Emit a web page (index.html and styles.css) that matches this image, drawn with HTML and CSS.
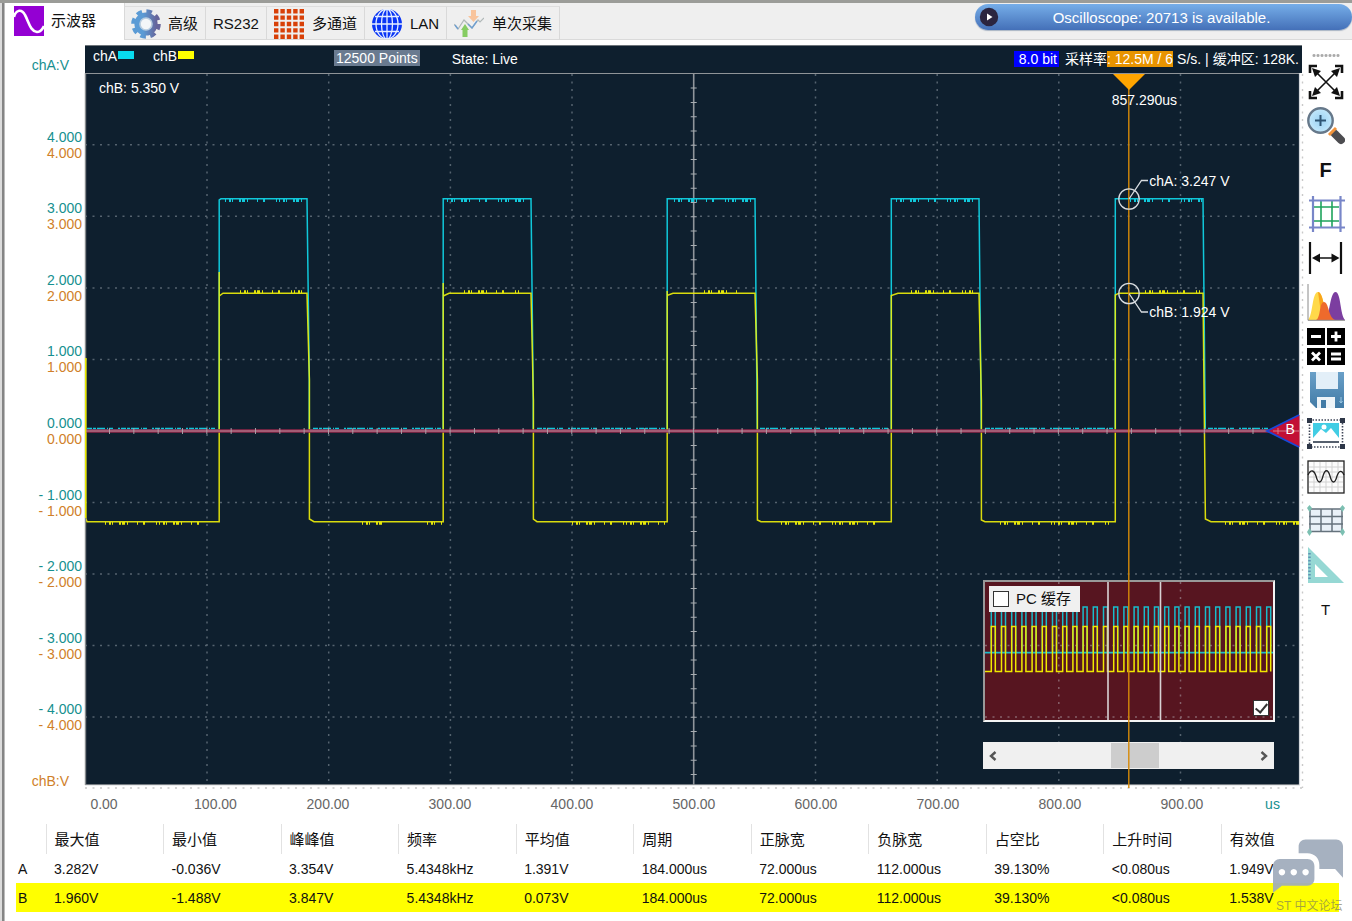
FILE: index.html
```html
<!DOCTYPE html>
<html lang="zh-CN">
<head>
<meta charset="utf-8">
<title>示波器</title>
<link rel="stylesheet" href="styles.css">
</head>
<body>
<div class="window">
  <header class="toolbar">
    <nav class="tabs">
      <button class="tab tab-active" type="button">
        <svg class="tab-icon" viewBox="0 0 30 30"><rect width="30" height="30" fill="#9400d3"/><path d="M0 11C2 3 8 3 11 9C15 16 16 25 23 26C26 26 28 24 30 20" fill="none" stroke="#fff" stroke-width="2.6"/></svg>
        <span>示波器</span>
      </button>
      <button class="tab tab-gear" type="button">
        <svg class="tab-icon" viewBox="0 0 30 30">
          <defs><linearGradient id="gear" gradientUnits="userSpaceOnUse" x1="0" y1="0" x2="30" y2="0"><stop offset=".4" stop-color="#5b9bd5"/><stop offset=".85" stop-color="#66659b"/></linearGradient></defs>
          <circle cx="15" cy="15" r="12.6" fill="none" stroke="url(#gear)" stroke-width="4.4" stroke-dasharray="5.5 4.4"/>
          <circle cx="15" cy="15" r="8.6" fill="none" stroke="url(#gear)" stroke-width="6"/>
          <circle cx="15" cy="15" r="6" fill="#f4f6f8" stroke="#b9cde0" stroke-width="1.6"/>
        </svg>
        <span>高级</span>
      </button>
      <button class="tab" type="button"><span>RS232</span></button>
      <button class="tab" type="button">
        <svg class="tab-icon" viewBox="0 0 30 30"><g stroke="#d84008" stroke-width="4.4" stroke-dasharray="4.4 2"><path d="M0 2.2H30M0 8.6H30M0 15H30M0 21.4H30M0 27.8H30"/></g></svg>
        <span>多通道</span>
      </button>
      <button class="tab" type="button">
        <svg class="tab-icon" viewBox="0 0 30 30"><circle cx="15" cy="15" r="15" fill="#0a35f5"/><g fill="none" stroke="#e6efff" stroke-width="1.3"><path d="M15 0V30M0 15H30M3 7.5H27M3 22.5H27"/><ellipse cx="15" cy="15" rx="5.5" ry="15"/><ellipse cx="15" cy="15" rx="11" ry="15"/></g></svg>
        <span>LAN</span>
      </button>
      <button class="tab" type="button">
        <svg class="tab-icon" viewBox="0 0 30 30"><path d="M0 15L4 20L10 11L18 19L24 11L26 13L30 9" fill="none" stroke="#b0b8b8" stroke-width="1.2"/><path d="M14 15L18 19L23 12M1 16L4 20" fill="none" stroke="#6f9fd0" stroke-width="1.4"/><path d="M17 1H22V7H25L19.500 13L14 7H17Z" fill="#f8c49c"/><path d="M11 15L15 21H13.500V28H8.500V21H7Z" fill="#86cc62"/></svg>
        <span>单次采集</span>
      </button>
    </nav>
    <div class="notice" role="status">
      <svg class="notice-icon" viewBox="0 0 20 20"><circle cx="10" cy="10" r="9.2" fill="#2b2540"/><path d="M8 6.5L13.5 10L8 13.5Z" fill="#fff"/></svg>
      <span class="notice-text">Oscilloscope: 20713 is available.</span>
    </div>
  </header>

  <main class="scope">
    <div class="y-axis">
      <div class="axis-name ch-a">chA:V</div>
      <div class="y-pair"><span class="ch-a">4.000</span><span class="ch-b">4.000</span></div>
      <div class="y-pair"><span class="ch-a">3.000</span><span class="ch-b">3.000</span></div>
      <div class="y-pair"><span class="ch-a">2.000</span><span class="ch-b">2.000</span></div>
      <div class="y-pair"><span class="ch-a">1.000</span><span class="ch-b">1.000</span></div>
      <div class="y-pair"><span class="ch-a">0.000</span><span class="ch-b">0.000</span></div>
      <div class="y-pair"><span class="ch-a">- 1.000</span><span class="ch-b">- 1.000</span></div>
      <div class="y-pair"><span class="ch-a">- 2.000</span><span class="ch-b">- 2.000</span></div>
      <div class="y-pair"><span class="ch-a">- 3.000</span><span class="ch-b">- 3.000</span></div>
      <div class="y-pair"><span class="ch-a">- 4.000</span><span class="ch-b">- 4.000</span></div>
      <div class="axis-name axis-name-low ch-b">chB:V</div>
    </div>

    <div class="status">
      <span class="legend">chA<i class="swatch swatch-a"></i></span>
      <span class="legend legend-b">chB<i class="swatch swatch-b"></i></span>
      <span class="points">12500 Points</span>
      <span class="state">State: Live</span>
      <span class="sampling"><b class="bits">8.0 bit</b><span>采样率</span><b class="rate">: 12.5M / 6</b><span class="buffer">S/s. | 缓冲区: 128K.</span></span>
    </div>

    <section class="plot">
      <svg class="layer" viewBox="85 73 1215 712" preserveAspectRatio="none">
        <g class="grid">
          <path d="M207 74V785M328.7 74V785M450.4 74V785M572 74V785M815.5 74V785M937.2 74V785M1058.8 74V785M1180.5 74V785"/>
          <path d="M85 144.8H1300M85 216.3H1300M85 287.9H1300M85 359.5H1300M85 502.5H1300M85 574H1300M85 645.4H1300M85 716.9H1300"/>
        </g>
        <path class="outer-dots" d="M1302.5 74V788M85 788H1302"/>
        <path d="M693.7 74V785" stroke="#8f959b" stroke-width="1.6"/>
        <path d="M693.7 87.6V785" stroke="#a8adb2" stroke-width="6" stroke-dasharray="1 13.3"/>

        <path class="trace trace-a" d="M86 430H219.2V200L221 198.8H307L309.3 378V430H443.2V198.8H531L533.3 400V430H667.2V198.8H755L757.3 430H891.3V198.8H979L981.3 430H1115.3V198.8H1203L1205.3 430H1300"/>
        <g class="noise noise-a">
          <path d="M225 200.500H307M447 200.500H531M674 200.500H753M896 200.500H978M1130 200.500H1202"/>
          <path class="noise-low" d="M87 428.5H219M313 428.5H443M537 428.5H667M760 428.5H891M985 428.5H1115M1208 428.5H1270"/>
        </g>
        <path class="trace trace-b" d="M85.7 358V518L87 521.7H219.2V272V296L223 293.2H307L309.4 380V519L314 521.7H443.2V283V296L449 293.2H531L533.4 400V519L537 521.7H667.2V291V295.5L673 293.2H755L757.4 380V520L761 521.7H891.3V295.5L898 293.2H979L981.4 400V520L985 521.7H1115.3V295L1119 293.2H1203L1205.4 519L1211 521.7H1300"/>
        <g class="noise noise-b">
          <path d="M240 291.8H307M464 291.8H519M704 291.8H740M911 291.8H973M1145 291.8H1201"/>
          <path d="M105 523.3H205M362 523.3H384M427 523.3H442M572 523.3H665M781 523.3H880M1000 523.3H1112M1225 523.3H1300"/>
        </g>
        <path d="M85 431H1300" stroke="#92274a" stroke-width="3.4"/>
        <path d="M85 431H1300" stroke="#b5929f" stroke-width="1.2"/>
        <path d="M109 431H1300" stroke="#a8a0a8" stroke-width="6" stroke-dasharray="1 23.33"/>
        <path d="M85.5 73V785" stroke="#85898c" stroke-width="1.4"/>
        <path d="M85.7 358V518" stroke="#e8e800" stroke-width="1.4"/>
        <path d="M85 73.5H1300M85 784.7H1300" stroke="#8f9498" stroke-width="1"/>
        <path d="M1299.5 73V785" stroke="#d4d8dc" stroke-width="1.2"/>
        <path d="M1267 431L1299.5 415V447Z" fill="#c20f35"/>
        <path d="M1299 415L1267 431L1299 447" fill="none" stroke="#1748d8" stroke-width="1.8"/>
        <path d="M1273 431H1299M1278 428V434" stroke="#d07c8c"/>
      </svg>
      <span class="tag tag-level">chB: 5.350 V</span>

      <div class="overview">
        <svg class="layer" viewBox="985 582 288 138" preserveAspectRatio="none">
          <path class="overview-grid" d="M1058.8 582V720M1180.5 582V720M985 645.4H1273M985 716.9H1273"/>
          <path d="M985 652.7H1273" stroke="#19bccb" stroke-width="1.8"/>
          <path fill="none" stroke="#19bccb" stroke-width="1.5" d="M991.3 652v-45h4v45m6.2 0v-45h4v45m6.2 0v-45h4v45m6.2 0v-45h4v45m6.2 0v-45h4v45m6.2 0v-45h4v45m6.2 0v-45h4v45m6.2 0v-45h4v45m6.2 0v-45h4v45m6.2 0v-45h4v45m6.2 0v-45h4v45m6.2 0v-45h4v45m6.2 0v-45h4v45m6.2 0v-45h4v45m6.2 0v-45h4v45m6.2 0v-45h4v45m6.2 0v-45h4v45m6.2 0v-45h4v45m6.2 0v-45h4v45m6.2 0v-45h4v45m6.2 0v-45h4v45m6.2 0v-45h4v45m6.2 0v-45h4v45m6.2 0v-45h4v45m6.2 0v-45h4v45m6.2 0v-45h4v45m6.2 0v-45h4v45m6.2 0v-45h4v45"/>
          <path fill="none" stroke="#f0e800" stroke-width="1.5" d="M985 671.5h6.3v-45h4v45h6.2v-45h4v45h6.2v-45h4v45h6.2v-45h4v45h6.2v-45h4v45h6.2v-45h4v45h6.2v-45h4v45h6.2v-45h4v45h6.2v-45h4v45h6.2v-45h4v45h6.2v-45h4v45h6.2v-45h4v45h6.2v-45h4v45h6.2v-45h4v45h6.2v-45h4v45h6.2v-45h4v45h6.2v-45h4v45h6.2v-45h4v45h6.2v-45h4v45h6.2v-45h4v45h6.2v-45h4v45h6.2v-45h4v45h6.2v-45h4v45h6.2v-45h4v45h6.2v-45h4v45h6.2v-45h4v45h6.2v-45h4v45h6.2v-45h4v45"/>
          <path d="M1108 582V720M1160.5 582V720" stroke="#d8d2d4" stroke-width="1.6"/>
        </svg>
        <label class="cache"><input class="check" type="checkbox"><span>PC 缓存</span></label>
        <input class="check check-corner" type="checkbox" checked aria-label="显示概览">
      </div>

      <div class="scrollbar">
        <button class="scroll-btn" type="button" aria-label="向左"><svg width="8" height="10" viewBox="0 0 8 10"><path d="M6.500 1L2 5L6.500 9" fill="none" stroke="#555" stroke-width="2.4"/></svg></button>
        <span class="scroll-thumb"></span>
        <button class="scroll-btn scroll-right" type="button" aria-label="向右"><svg width="8" height="10" viewBox="0 0 8 10"><path d="M1.500 1L6 5L1.500 9" fill="none" stroke="#555" stroke-width="2.4"/></svg></button>
      </div>

      <svg class="layer layer-cursor" viewBox="85 73 1215 712" preserveAspectRatio="none">
        <path d="M1128.800 74V788" stroke="#d68a08" stroke-width="1.4"/>
        <path d="M1113 74H1145L1129 90Z" fill="#ffa500"/>
        <g fill="none" stroke="#d8dce0" stroke-width="1.3"><circle cx="1129" cy="199" r="10.200"/><circle cx="1129" cy="293.500" r="10.200"/><path d="M1129 199L1141.500 180.500H1148M1129 293.500L1141.500 312H1148"/></g>
      </svg>
      <span class="tag tag-time">857.290us</span>
      <span class="tag tag-a">chA: 3.247 V</span>
      <span class="tag tag-b">chB: 1.924 V</span>
      <span class="tag tag-trigger">B</span>
    </section>

    <div class="x-axis">
      <span>0.00</span><span class="x-first">100.00</span><span>200.00</span><span>300.00</span><span>400.00</span><span>500.00</span><span>600.00</span><span>700.00</span><span>800.00</span><span>900.00</span><span class="ch-a">us</span>
    </div>

    <aside class="tools">
      <span class="grip"></span>
      <button class="tool" type="button" aria-label="适应窗口"><svg viewBox="0 0 38 38"><g fill="none" stroke="#111"><path d="M8 8L30 30M30 8L8 30" stroke-width="1.600"/><path d="M3 10V3H10M28 3H35V10M35 28V35H28M10 35H3V28" stroke-width="2.600"/></g><path d="M5 5L14 8L8 14ZM33 5L24 8L30 14ZM33 33L24 30L30 24ZM5 33L14 30L8 24Z" fill="#111"/></svg></button>
      <button class="tool" type="button" aria-label="放大"><svg viewBox="0 0 38 38"><defs><radialGradient id="lens"><stop offset="0" stop-color="#9bd2f4"/><stop offset="1" stop-color="#c3e8fb"/></radialGradient></defs><path d="M28 27L34 33" stroke="#4c4c50" stroke-width="8" stroke-linecap="round"/><path d="M22 28L29 21" stroke="#f2943c" stroke-width="3"/><circle cx="13.500" cy="13.500" r="12.200" fill="url(#lens)" stroke="#66788a" stroke-width="2.400"/><path d="M13.500 8V19M8 13.500H19" stroke="#2f5573" stroke-width="2"/></svg></button>
      <button class="tool tool-bold" type="button">F</button>
      <button class="tool" type="button" aria-label="网格"><svg viewBox="0 0 38 38"><path d="M7 12H32M7 26H32M14 6V32M25 6V32" stroke="#1fa35c" stroke-width="1.600"/><path d="M2 5.500H38M2 32.500H38M6 1V37M33.500 1V37" stroke="#7886c8" stroke-width="2.200"/></svg></button>
      <button class="tool" type="button" aria-label="水平测量"><svg viewBox="0 0 38 38"><path d="M3 3V35M34 3V35" stroke="#111" stroke-width="2.200"/><path d="M8 19H30" stroke="#111" stroke-width="1.500"/><path d="M5 19L13 14.500V23.500ZM32.500 19L24.500 14.500V23.500Z" fill="#111"/></svg></button>
      <button class="tool" type="button" aria-label="直方图"><svg viewBox="0 0 38 38"><path d="M1 37C6 32 5 9 11 9C17 9 17 32 22 37Z" fill="#ffd94a"/><path d="M11 9C17 9 17 32 22 37H15Z" fill="#f9a51b"/><path d="M18 37C23 32 23 9 28.500 9C34 9 33 32 38 37Z" fill="#7c3ea0"/><path d="M9 37C14 35 12 19 17 19C22 19 21 34 28 37Z" fill="#ee6a2c"/><path d="M1 1V37.300H38" fill="none" stroke="#8a8a8a"/></svg></button>
      <button class="tool" type="button" aria-label="运算"><svg viewBox="0 0 38 38"><path d="M0 1H18V18H0ZM20 1H38V18H20ZM0 21H18V38H0ZM20 21H38V38H20Z" fill="#000"/><path d="M4 9.500H14M24 9.500H34M29 4.500V14.500M5 25.500L13 33.500M13 25.500L5 33.500M24 27H34M24 32H34" stroke="#fff" stroke-width="2.800"/></svg></button>
      <button class="tool" type="button" aria-label="保存"><svg viewBox="0 0 38 38"><defs><linearGradient id="disk" x1="0" y1="0" x2="0" y2="1"><stop offset="0" stop-color="#6aa0c8"/><stop offset="1" stop-color="#427ba6"/></linearGradient></defs><path d="M3 1H37V37H9L3 31Z" fill="url(#disk)"/><path d="M9 1H31V18H9Z" fill="#e3eff8"/><path d="M10 26H28V37H10Z" fill="#eef4f8"/><path d="M14 29H19V37H14Z" fill="#427ba6"/><path d="M34 26V32M32.500 30L34 32L35.500 30" fill="none" stroke="#9cc8e4"/></svg></button>
      <button class="tool" type="button" aria-label="截图"><svg viewBox="0 0 38 38"><rect x="2.500" y="5" width="33" height="27" fill="none" stroke="#3f4758" stroke-width="1.600" stroke-dasharray="1.500 1.500"/><path d="M0 3H5V8H0ZM33 3H38V8H33ZM0 29H5V34H0ZM33 29H38V34H33Z" fill="#2e3748"/><path d="M6 8H32V23H6Z" fill="#42cde4"/><path d="M6 23L14 14L19 18L24 13L32 23Z" fill="#fff"/><circle cx="17" cy="12" r="2.500" fill="#fff"/><path d="M6 27H32" stroke="#56606e" stroke-width="2"/></svg></button>
      <button class="tool" type="button" aria-label="波形"><svg viewBox="0 0 38 38"><rect x="1" y="2" width="36" height="32" fill="#fcfcfc" stroke="#222" stroke-width="1.300"/><path d="M7 3V33M13 3V33M19 3V33M25 3V33M31 3V33M2 8H36M2 13H36M2 18H36M2 23H36M2 28H36" stroke="#d2d2d2"/><path d="M1 16C4 10 7 11 9 17C11 25 14 25 16 17C18 10 21 10 23 17C25 25 28 25 30 17C32 11 35 11 37 16" fill="none" stroke="#222" stroke-width="1.300"/></svg></button>
      <button class="tool" type="button" aria-label="表格"><svg viewBox="0 0 38 38"><path d="M2.500 5.500H35V29H2.500Z" fill="#e9f1f8"/><path d="M2 6H36M2 13.500H36M2 21H36M2 28.500H36M3 6V29M14 6V29M25 6V29M35 6V29" stroke="#65727c" stroke-width="1.500"/><path d="M0 5L2.500 2L5 5L2.500 9ZM33 5L35.500 2L38 5L35.500 9ZM0 29L2.500 25L5 29L2.500 33ZM33 29L35.500 25L38 29L35.500 33Z" fill="#7cc0b2"/></svg></button>
      <button class="tool" type="button" aria-label="三角尺"><svg viewBox="0 0 38 38"><path fill-rule="evenodd" d="M1 0L37 36H1ZM8 17V30H21Z" fill="#96d8d4"/><path d="M2.500 6V34" stroke="#5f92b4" stroke-width="2.500" stroke-dasharray="1.500 2"/></svg></button>
      <button class="tool" type="button">T</button>
    </aside>
  </main>

  <footer class="measurements">
    <table class="stats">
      <thead><tr><th class="row-key"></th><th>最大值</th><th>最小值</th><th>峰峰值</th><th>频率</th><th>平均值</th><th>周期</th><th>正脉宽</th><th>负脉宽</th><th>占空比</th><th>上升时间</th><th>有效值</th></tr></thead>
      <tbody>
        <tr><td>A</td><td>3.282V</td><td>-0.036V</td><td>3.354V</td><td>5.4348kHz</td><td>1.391V</td><td>184.000us</td><td>72.000us</td><td>112.000us</td><td>39.130%</td><td>&lt;0.080us</td><td>1.949V</td></tr>
        <tr class="row-b"><td>B</td><td>1.960V</td><td>-1.488V</td><td>3.847V</td><td>5.4348kHz</td><td>0.073V</td><td>184.000us</td><td>72.000us</td><td>112.000us</td><td>39.130%</td><td>&lt;0.080us</td><td>1.538V</td></tr>
      </tbody>
    </table>
    <div class="watermark">
      <svg width="71" height="54" viewBox="0 0 72 54"><g fill="#9fabbb" fill-opacity=".93"><path d="M26 14V7C26 3 29 0 33 0H64C68 0 71 3 71 7V39L63 30H47V26C47 19 42 14 35 14Z"/><path fill-rule="evenodd" d="M7 20H35C39 20 42 23 42 27V40C42 44 39 47 35 47H9L0 54V27C0 23 3 20 7 20ZM9 30a3.300 3.300 0 1 0 .1 0ZM21 30a3.300 3.300 0 1 0 .1 0ZM33 30a3.300 3.300 0 1 0 .1 0Z"/></g></svg>
      <span>ST 中文论坛</span>
    </div>
  </footer>
</div>
</body>
</html>
```
FILE: styles.css
```css
* { box-sizing: border-box; }

body {
  margin: 0;
  font-family: "Liberation Sans", "Noto Sans CJK SC", sans-serif;
  font-size: 14px;
  line-height: 16px;
  color: #111;
  background: #fff;
}

button {
  font: inherit;
  color: inherit;
  padding: 0;
  margin: 0;
  border: 0;
  background: none;
}

.window {
  min-height: 100vh;
  display: flex;
  flex-direction: column;
  padding: 0 0 9px 5px;
  border-top: 3px solid #9b9c98;
  background: linear-gradient(90deg, #dcdcdc 0 2px, #858585 2px 4px, #bcbcbc 4px 5px, #fff 5px);
}

/* Toolbar */
.toolbar {
  display: flex;
  justify-content: space-between;
  align-items: flex-start;
  height: 37px;
  background: #efefef;
  border-bottom: 1px solid #dadada;
}

.tabs { display: flex; align-items: flex-start; }

.tab {
  display: flex;
  align-items: center;
  gap: 8px;
  height: 34px;
  margin-top: 3px;
  padding: 0 7px;
  border-right: 1px solid #d9d9d9;
  border-top: 1px solid #dedede;
  font-size: 15px;
  line-height: 20px;
  white-space: nowrap;
}

.tab-active {
  gap: 7px;
  height: 37px;
  width: 120px;
  margin-top: 0;
  padding: 0 9px 2px;
  border-top: 0;
  background: #fff;
}

.tab-gear { gap: 7px; padding-left: 6px; }

.tab-icon { width: 30px; height: 30px; flex: none; }

.notice {
  display: flex;
  align-items: center;
  width: 377px;
  height: 26px;
  margin-top: 1px;
  padding-left: 4px;
  border-radius: 13px;
  background: linear-gradient(#76aee9, #4470b8);
  box-shadow: 0 1px 1px #a8b4c4;
  color: #fff;
}

.notice-icon { width: 20px; height: 20px; }

.notice-text {
  flex: 1;
  padding: 2px 28px 0 0;
  text-align: center;
  font-size: 15px;
  line-height: 20px;
}

/* Scope */
.scope {
  flex: 1;
  display: grid;
  grid-template-columns: 80px minmax(0, 1fr) 50px;
  grid-template-rows: 28px minmax(620px, 1fr) 39px;
  padding-top: 5px;
}

.y-axis {
  grid-column: 1;
  grid-row: 1 / 3;
  display: grid;
  grid-template-rows: 64px repeat(9, 1fr) 32px;
  padding-right: 3px;
  text-align: right;
}

.y-pair { display: flex; flex-direction: column; justify-content: center; }
.ch-a { color: #169090; }
.ch-b { color: #d07f2a; }
.axis-name { padding: 12px 13px 0 0; }
.axis-name-low { padding-top: 20px; }

.status {
  grid-column: 2;
  grid-row: 1;
  display: flex;
  align-items: center;
  padding: 0 3px 2px 8px;
  border-top: 1px solid #6d747a;
  background: #0e1f2e;
  color: #fff;
  white-space: nowrap;
}

.legend { display: flex; padding-bottom: 5px; width: 60px; }
.swatch { width: 16px; height: 8px; margin-top: 3px; margin-left: 1px; }
.swatch-a { background: #08dcf0; }
.swatch-b { background: #ffff00; }
.legend-b { width: 181px; }
.points { margin-top: -2px; padding: 0 2px; background: #6a7b90; }
.state { margin-left: 32px; }
.sampling { display: flex; margin-left: auto; line-height: 16px; }
.bits, .rate { font-weight: 400; }
.bits { padding: 0 2px 0 5px; margin-right: 6px; background: #0000ff; }
.rate { padding: 0; background: #e89400; }
.buffer { margin-left: 4px; }

.plot {
  grid-column: 2;
  grid-row: 2;
  position: relative;
  margin-right: 2px;
  background: #0e1f2e;
}

.layer {
  position: absolute;
  inset: 0;
  width: 100%;
  height: 100%;
  overflow: visible;
}

.layer-cursor { pointer-events: none; }

.grid { fill: none; stroke: #55636f; stroke-width: 1.5; stroke-dasharray: 2 5.5; }
.outer-dots { fill: none; stroke: #c9c9c9; stroke-width: 1.4; stroke-dasharray: 2 5.5; }
.trace { fill: none; stroke-width: 1.5; }
.trace-a { stroke: #10c8da; }
.trace-b { stroke: #f0f00a; stroke-opacity: .9; }
.noise { fill: none; stroke-width: 3; stroke-dasharray: 1 3 2 1 1 6 2 1 3 2 1 9 1 5 2 11 1 2; }
.noise-a { stroke: #10c8da; }
.noise-b { stroke: #e4e60a; }
.noise-low { stroke-width: 1.4; stroke-dasharray: 5 1 3 1 8 2 1 1 4 5 2 1; }

.tag { position: absolute; color: #fff; white-space: nowrap; }
.tag-level { left: 14px; top: 7px; }
.tag-time { left: 84.5%; top: 19px; }
.tag-a { left: 87.6%; top: 14%; }
.tag-b { left: 87.6%; top: 32.4%; }
.tag-trigger { left: 98.8%; top: 48.9%; }

/* Overview window and its scrollbar */
.overview {
  position: absolute;
  right: 25px;
  bottom: 63px;
  width: 292px;
  height: 142px;
  border: 2px solid #999;
  border-right-color: #f4f4f4;
  border-bottom-color: #f4f4f4;
  background: #571520;
}

.overview .layer { overflow: hidden; }
.overview-grid { fill: none; stroke: #86616a; stroke-width: 1.5; stroke-dasharray: 2 5.5; }

.cache {
  position: absolute;
  left: 4px;
  top: 4px;
  display: flex;
  align-items: center;
  gap: 7px;
  height: 26px;
  padding: 0 9px 0 4px;
  background: #f0f0f0;
  font-size: 15px;
  line-height: 20px;
  white-space: nowrap;
}

.check {
  appearance: none;
  position: relative;
  width: 16px;
  height: 16px;
  margin: 0;
  border: 1px solid #333;
  background: #fff;
}

.check:checked::after {
  content: "";
  position: absolute;
  left: 4px;
  top: 0;
  width: 5px;
  height: 10px;
  border: solid #333;
  border-width: 0 2px 2px 0;
  transform: rotate(40deg);
}

.check-corner { position: absolute; right: 4px; bottom: 4px; }

.scrollbar {
  position: absolute;
  right: 26px;
  bottom: 16px;
  display: flex;
  align-items: center;
  justify-content: space-between;
  width: 291px;
  height: 27px;
  background: #f0f0f0;
}

.scroll-btn { display: flex; align-items: center; justify-content: center; width: 20px; height: 27px; }
.scroll-thumb { width: 48px; height: 25px; margin-left: 12px; background: #cdcdcd; }

.x-axis {
  grid-column: 2;
  grid-row: 3;
  display: grid;
  grid-template-columns: 38fr 144fr repeat(8, 122fr) 59fr;
  padding-top: 11px;
  text-align: center;
  color: #666;
}

.x-axis .ch-a { color: #169090; }
.x-first { padding-left: 41px; }

/* Side tools */
.tools {
  grid-column: 3;
  grid-row: 1 / 4;
  display: flex;
  flex-direction: column;
  align-items: center;
  padding-right: 3px;
}

.grip { width: 28px; height: 15px; background: radial-gradient(circle, #aaa 1px, transparent 2px) 0 8px / 4px 5px repeat-x; }

.tool {
  display: flex;
  align-items: center;
  justify-content: center;
  width: 40px;
  height: 44px;
  font-size: 15px;
}

.tool svg { width: 38px; height: 38px; }
.tool-bold { font-size: 20px; font-weight: 700; }

/* Measurements */
.measurements { position: relative; padding: 0 13px 0 11px; }

.stats {
  width: 100%;
  table-layout: fixed;
  border-collapse: collapse;
}

.stats th, .stats td { height: 29px; padding: 0 0 0 8px; text-align: left; white-space: nowrap; }
.stats th { height: 30px; padding-top: 1px; border-left: 1px solid #e2e2e2; font-size: 15px; font-weight: 400; }
.stats .row-key { width: 30px; border-left: 0; }
.stats td:first-child { padding-left: 2px; }
.row-b { background: #ffff00; }

.watermark {
  position: absolute;
  right: 8px;
  bottom: -2px;
  display: flex;
  flex-direction: column;
  gap: 5px;
  font-size: 12px;
  color: #77775aa8;
  white-space: nowrap;
}

.watermark span { padding-left: 3px; }
```
